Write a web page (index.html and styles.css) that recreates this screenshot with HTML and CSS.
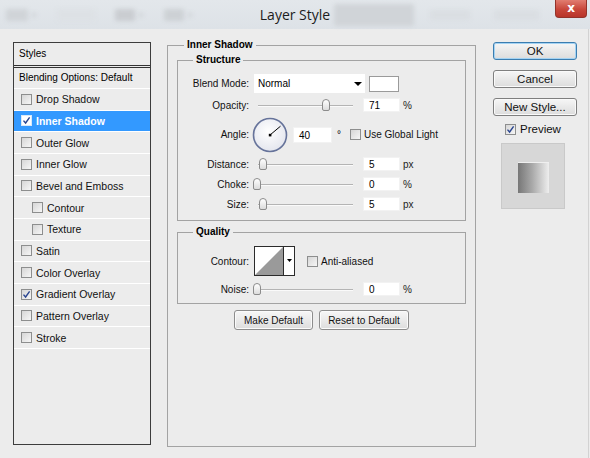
FILE: index.html
```html
<!DOCTYPE html>
<html>
<head>
<meta charset="utf-8">
<title>Layer Style</title>
<link rel="stylesheet" href="styles.css">
</head>
<body>
<div class="window">
  <header class="titlebar">
    <div class="ghosts ghosts-left">
      <span class="ghost g1"></span><span class="ghost g-arrow"></span>
      <span class="ghost g2"></span>
      <span class="ghost g3"></span><span class="ghost g-arrow"></span>
      <span class="ghost g4"></span><span class="ghost g-arrow"></span>
    </div>
    <h1 class="title">Layer Style</h1>
    <div class="ghosts ghosts-right">
      <span class="ghost g5"></span>
      <span class="ghost g6"></span>
      <span class="ghost g7"></span>
      <button class="close">x</button>
    </div>
  </header>

  <main class="dialog">
    <aside class="styles-list">
      <div class="list-head">Styles</div>
      <div class="list-blend">Blending Options: Default</div>
      <ul class="effects">
        <li><span class="cb"></span>Drop Shadow</li>
        <li class="active"><span class="cb cb-white"><svg viewBox="0 0 9 9"><path d="M1.5 4.6 L3.6 7 L7.6 1.4" /></svg></span>Inner Shadow</li>
        <li><span class="cb"></span>Outer Glow</li>
        <li><span class="cb"></span>Inner Glow</li>
        <li><span class="cb"></span>Bevel and Emboss</li>
        <li class="sub"><span class="cb"></span>Contour</li>
        <li class="sub"><span class="cb"></span>Texture</li>
        <li><span class="cb"></span>Satin</li>
        <li><span class="cb"></span>Color Overlay</li>
        <li><span class="cb"><svg viewBox="0 0 9 9"><path d="M1.5 4.6 L3.6 7 L7.6 1.4" /></svg></span>Gradient Overlay</li>
        <li><span class="cb"></span>Pattern Overlay</li>
        <li><span class="cb"></span>Stroke</li>
      </ul>
    </aside>

    <section class="settings">
      <fieldset class="group outer">
        <legend class="legend-outer">Inner Shadow</legend>

        <fieldset class="group structure">
          <legend class="legend-inner">Structure</legend>
          <div class="row row-blend">
            <span class="lbl">Blend Mode:</span>
            <div class="select"><span>Normal</span><span class="arrow"></span></div>
            <span class="swatch"></span>
          </div>
          <div class="row row-slider row-opacity">
            <span class="lbl">Opacity:</span>
            <div class="slider"><span class="knob" style="left:64px"></span></div>
            <span class="num">71</span><span class="unit">%</span>
          </div>
          <div class="row row-angle">
            <span class="lbl">Angle:</span>
            <svg class="dial" viewBox="0 0 36 36" width="36" height="36">
              <defs>
                <radialGradient id="dialfill" cx="45%" cy="40%" r="60%">
                  <stop offset="0" stop-color="#ffffff"/>
                  <stop offset="1" stop-color="#e4e6ee"/>
                </radialGradient>
              </defs>
              <circle cx="18" cy="18" r="16.5" fill="url(#dialfill)" stroke="#66739a" stroke-width="1.6"/>
              <line x1="18" y1="18" x2="28.5" y2="9.2" stroke="#000" stroke-width="1"/>
              <rect x="16.8" y="16.8" width="2.6" height="2.6" fill="#000"/>
            </svg>
            <span class="num num-angle">40</span><span class="deg">°</span>
            <span class="cb cb-angle"></span><span class="cb-label">Use Global Light</span>
          </div>
          <div class="row row-slider row-distance">
            <span class="lbl">Distance:</span>
            <div class="slider"><span class="knob" style="left:1px"></span></div>
            <span class="num">5</span><span class="unit">px</span>
          </div>
          <div class="row row-slider row-choke">
            <span class="lbl">Choke:</span>
            <div class="slider"><span class="knob" style="left:-5px"></span></div>
            <span class="num">0</span><span class="unit">%</span>
          </div>
          <div class="row row-slider row-size">
            <span class="lbl">Size:</span>
            <div class="slider"><span class="knob" style="left:1px"></span></div>
            <span class="num">5</span><span class="unit">px</span>
          </div>
        </fieldset>

        <fieldset class="group quality">
          <legend class="legend-inner">Quality</legend>
          <div class="row row-contour">
            <span class="lbl">Contour:</span>
            <svg class="contour" viewBox="0 0 41 30" width="41" height="30">
              <rect x="0.5" y="0.5" width="40" height="29" fill="#fff" stroke="#2b2b2b"/>
              <polygon points="1,29 29,1 29,29" fill="#9a9a9a"/>
              <line x1="29.5" y1="1" x2="29.5" y2="29" stroke="#2b2b2b"/>
              <polygon points="33,13 38,13 35.5,16" fill="#000"/>
            </svg>
            <span class="cb cb-anti"></span><span class="cb-label">Anti-aliased</span>
          </div>
          <div class="row row-slider row-noise">
            <span class="lbl">Noise:</span>
            <div class="slider"><span class="knob" style="left:-5px"></span></div>
            <span class="num">0</span><span class="unit">%</span>
          </div>
        </fieldset>

        <div class="btn-row">
          <button class="btn btn-make">Make Default</button>
          <button class="btn btn-reset">Reset to Default</button>
        </div>
      </fieldset>
    </section>

    <aside class="actions">
      <button class="dlg-btn dlg-ok">OK</button>
      <button class="dlg-btn">Cancel</button>
      <button class="dlg-btn">New Style...</button>
      <div class="preview-row">
        <span class="cb"><svg viewBox="0 0 9 9"><path d="M1.5 4.6 L3.6 7 L7.6 1.4" /></svg></span>
        <span class="preview-label">Preview</span>
      </div>
      <div class="preview-box"><div class="preview-swatch"></div></div>
    </aside>
  </main>
</div>
</body>
</html>
```

FILE: styles.css
```css
html, body {
  margin: 0;
  padding: 0;
}

body {
  width: 590px;
  height: 458px;
  overflow: hidden;
  background: #ececec;
  font-family: "Liberation Sans", Arial, sans-serif;
  font-size: 10px;
  color: #000;
}

.window {
  width: 590px;
  height: 458px;
  display: flex;
  flex-direction: column;
}

/* ---------- title bar ---------- */
.titlebar {
  height: 29px;
  flex: none;
  display: grid;
  grid-template-columns: 1fr auto 1fr;
  align-items: center;
  background: linear-gradient(#e3e7eb, #dde2e7);
}

.title {
  margin: 0;
  font-family: "Open Sans", "Liberation Sans", sans-serif;
  font-weight: 400;
  font-size: 14px;
  line-height: 20px;
  color: #1c1c1c;
}

.ghosts {
  display: flex;
  align-items: center;
  height: 29px;
}

.ghost {
  display: block;
  filter: blur(2px);
  background: #d2d6da;
  border-radius: 2px;
  height: 12px;
}

.ghosts-left .g1 { width: 22px; margin-left: 6px; background: #d0d4d8; }
.ghosts-left .g-arrow { width: 6px; height: 4px; margin-left: 3px; background: #d2d6da; }
.ghosts-left .g2 { width: 38px; margin-left: 20px; background: #dde1e5; }
.ghosts-left .g3 { width: 20px; margin-left: 20px; background: #cacdd1; }
.ghosts-left .g4 { width: 20px; margin-left: 20px; background: #cdd1d5; }

.ghosts-right .g5 { width: 80px; height: 22px; margin-left: 4px; background: #d0d4d8; }
.ghosts-right .g6 { width: 40px; height: 10px; margin-left: 16px; background: #dadee2; }
.ghosts-right .g7 { width: 45px; height: 10px; margin-left: 24px; background: #dadee2; }

.close {
  align-self: start;
  margin-left: auto;
  margin-right: 3px;
  width: 32px;
  height: 18px;
  padding: 0 0 2px;
  border: 1px solid #93332a;
  border-top: none;
  border-radius: 0 0 4px 4px;
  background: linear-gradient(#e17d70, #c8473a 55%, #b8352a);
  color: #fff;
  font-family: "DejaVu Sans", sans-serif;
  font-weight: bold;
  font-size: 12px;
  line-height: 14px;
}

/* ---------- dialog body ---------- */
.dialog {
  flex: 1;
  display: flex;
  align-items: flex-start;
  width: 589px;
  box-sizing: border-box;
  padding: 13px 0 0 13px;
  border-right: 1px solid #d2d2d2;
  background: #ececec;
}

/* ---------- styles list ---------- */
.styles-list {
  flex: none;
  width: 138px;
  height: 403px;
  box-sizing: border-box;
  border: 1px solid #3d3d3d;
  background: #ececec;
}

.list-head {
  height: 22px;
  line-height: 22px;
  padding-left: 5px;
  border-bottom: 3px double #333;
}

.list-blend {
  height: 20px;
  line-height: 20px;
  padding-left: 5px;
  border-bottom: 1px solid #fff;
}

.effects {
  list-style: none;
  margin: 0;
  padding: 0;
}

.effects li {
  height: 21.67px;
  box-sizing: border-box;
  border-bottom: 1px solid #fff;
  display: flex;
  align-items: center;
  gap: 4px;
  padding-left: 7px;
  font-size: 10.5px;
  color: #111;
}

.effects li.sub {
  padding-left: 18px;
}

.effects li.active {
  background: #3399ff;
  color: #fff;
  font-weight: bold;
}

/* checkbox */
.cb {
  flex: none;
  display: flex;
  align-items: center;
  justify-content: center;
  width: 11px;
  height: 11px;
  box-sizing: border-box;
  border: 1px solid #8d8e8e;
  background: linear-gradient(135deg, #d6d6d6, #f6f6f6);
}

.cb svg {
  width: 9px;
  height: 9px;
}

.cb svg path {
  fill: none;
  stroke: #2a4590;
  stroke-width: 1.4;
}

.cb-white {
  background: #fff;
  border-color: #d8e8f8;
}

/* ---------- settings panel ---------- */
.settings {
  flex: none;
  width: 309px;
  margin-left: 16px;
  margin-top: -3px;
}

fieldset.group {
  margin: 0;
  min-width: 0;
  border: 1px solid #a3a3a3;
}

fieldset legend {
  font-weight: bold;
  font-size: 10px;
  line-height: 12px;
  padding: 0 3px;
}

fieldset.outer {
  height: 408px;
  box-sizing: border-box;
  padding: 0 9px;
}

.legend-outer { margin-left: 7px; }
.legend-inner { margin-left: 15px; }

fieldset.structure {
  margin-top: 3px;
  padding: 8px 0 9px;
}

fieldset.quality {
  margin-top: 5px;
  padding: 8px 0 7px;
}

.row {
  display: flex;
  align-items: center;
}

.lbl {
  flex: none;
  width: 71px;
  text-align: right;
  color: #111;
}

.row-blend { height: 19px; }
.row-opacity { margin-top: 5px; }
.row-angle { margin-top: 5px; height: 35px; }
.row-distance { margin-top: 5px; }
.row-choke { margin-top: 6px; }
.row-size { margin-top: 6px; }
.row-contour { height: 30px; }
.row-noise { margin-top: 6px; }

.row-slider { height: 14px; }

.select {
  flex: none;
  margin-left: 5px;
  width: 111px;
  height: 19px;
  box-sizing: border-box;
  padding: 0 3px 0 4px;
  background: #fff;
  display: flex;
  align-items: center;
  justify-content: space-between;
}

.arrow {
  width: 0;
  height: 0;
  border-left: 4px solid transparent;
  border-right: 4px solid transparent;
  border-top: 4px solid #000;
}

.swatch {
  flex: none;
  margin-left: 4px;
  width: 30px;
  height: 16px;
  box-sizing: border-box;
  border: 1px solid #9a9a9a;
  background: #fff;
}

.slider {
  flex: none;
  position: relative;
  margin-left: 9px;
  width: 95px;
  height: 14px;
}

.slider::before {
  content: "";
  position: absolute;
  left: 0;
  right: 0;
  top: 7px;
  height: 1px;
  background: #b4b4b4;
  box-shadow: 0 1px 0 #fafafa;
}

.knob {
  position: absolute;
  top: 1px;
  width: 8px;
  height: 12px;
  box-sizing: border-box;
  border: 1px solid #8c8c8c;
  border-radius: 4px 4px 2px 2px;
  background: linear-gradient(#ffffff, #dcdcdc);
}

.num {
  flex: none;
  margin-left: 10px;
  width: 37px;
  height: 14px;
  line-height: 14px;
  box-sizing: border-box;
  padding-left: 5px;
  background: #fff;
  border: 1px solid #f2f2f2;
}

.unit {
  margin-left: 3px;
  color: #222;
}

.dial {
  flex: none;
  margin-left: 3px;
}

.num-angle {
  margin-left: 5px;
  width: 39px;
  height: 16px;
  line-height: 16px;
}

.deg {
  margin-left: 5px;
  font-size: 10px;
}

.cb-angle {
  margin-left: 9px;
}

.cb-label {
  margin-left: 3px;
  color: #111;
}

.contour {
  flex: none;
  margin-left: 5px;
}

.cb-anti {
  margin-left: 12px;
}

.btn-row {
  display: flex;
  justify-content: center;
  gap: 6px;
  margin-top: 6px;
}

.btn {
  height: 20px;
  padding: 0;
  border: 1px solid #8d8d8d;
  border-radius: 3px;
  background: linear-gradient(#f7f7f7, #dddddd);
  box-shadow: inset 0 0 0 1px #fbfbfb;
  font-family: "Liberation Sans", Arial, sans-serif;
  font-size: 10px;
  color: #111;
}

.btn-make { width: 79px; }
.btn-reset { width: 90px; }

/* ---------- right actions ---------- */
.actions {
  flex: none;
  width: 84px;
  margin-left: 17px;
  display: flex;
  flex-direction: column;
}

.dlg-btn {
  height: 18px;
  margin-top: 10px;
  padding: 0;
  border: 1px solid #7f7f7f;
  border-radius: 3px;
  background: linear-gradient(#f6f6f6, #dcdcdc);
  box-shadow: inset 0 0 0 1px #fafafa;
  font-family: "Liberation Sans", Arial, sans-serif;
  font-size: 11.5px;
  line-height: 14px;
  color: #111;
}

.dlg-ok {
  margin-top: 0;
  border-color: #3b7db0;
  box-shadow: inset 0 0 0 1px #a4d3f3;
}

.preview-row {
  display: flex;
  align-items: center;
  gap: 4px;
  margin-top: 7px;
  margin-left: 12px;
  height: 12px;
}

.preview-label {
  font-size: 11.5px;
  color: #111;
}

.preview-box {
  margin-top: 8px;
  margin-left: 8px;
  width: 64px;
  height: 66px;
  box-sizing: border-box;
  border: 1px solid #c9c9c9;
  background: #d7d7d7;
  display: flex;
  align-items: center;
  justify-content: center;
  padding-top: 2px;
}

.preview-swatch {
  width: 31px;
  height: 31px;
  box-sizing: border-box;
  border-top: 1px solid #efefef;
  background: linear-gradient(to right, #777777, #a8a8a8 45%, #eeeeee);
}
```
